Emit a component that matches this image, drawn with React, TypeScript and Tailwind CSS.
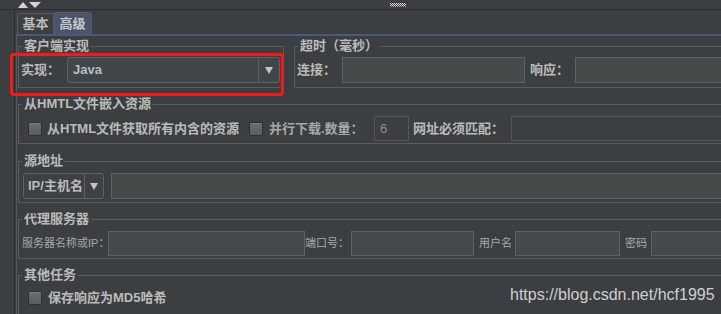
import React from "react";

const FONT = "font-['Liberation_Sans','Noto_Sans_CJK_SC',sans-serif]";

function Arrow({ color = "#c4c4c4" }: { color?: string }) {
  return (
    <svg width="8" height="7" viewBox="0 0 8 7">
      <polygon points="0,0 8,0 4,7" fill={color} />
    </svg>
  );
}

function Combo({ text, w, arrowW, bg, textCls }: { text: string; w: string; arrowW: string; bg: string; textCls: string }) {
  return (
    <div className={`flex h-[26px] shrink-0 rounded-[3px] border border-[#5f6264] ${bg} ${w}`}>
      <div className={`flex flex-1 items-center pl-[4px] ${textCls}`}>{text}</div>
      <div className={`flex items-center justify-center border-l border-[#5f6264] ${arrowW}`}>
        <Arrow />
      </div>
    </div>
  );
}

function Check() {
  return (
    <div className="h-[14px] w-[14px] shrink-0 rounded-[2px] border border-[#2e3032] bg-gradient-to-b from-[#6b6e70] to-[#5a5d5f] shadow-[inset_0_1px_0_#7a7d7f]" />
  );
}

function Group({ title, className = "", children }: { title: string; className?: string; children: React.ReactNode }) {
  return (
    <fieldset className={`border border-[#595b5d] px-[2px] ${className}`}>
      <legend className="ml-[1px] px-[2px] text-[13px] leading-[14px] font-semibold text-[#bbbbbb]">{title}</legend>
      {children}
    </fieldset>
  );
}

export default function App() {
  return (
    <div className={`relative flex h-[314px] w-[721px] flex-col overflow-hidden bg-[#3c3f41] ${FONT}`}>
      {/* top strip */}
      <div className="relative flex h-[10px] shrink-0 items-start border-b border-[#2b2b2b]">
        <svg className="ml-[18px] mt-[2px]" width="23" height="6" viewBox="0 0 23 6">
          <polygon points="0,6 5,0 10,6" fill="#d2d2d2" />
          <polygon points="11,0 23,0 17,6" fill="#d2d2d2" />
        </svg>
        <svg className="ml-[349px] mt-[3px]" width="16" height="4" viewBox="0 0 16 4">
          {[0, 1, 2, 3, 4, 5, 6, 7].map((i) => (
            <g key={i}>
              <rect x={i * 2} y={0} width="1" height="1" fill="#e0e0e0" />
              <rect x={i * 2 + 1} y={1} width="1" height="1" fill="#e0e0e0" />
              <rect x={i * 2} y={2} width="1" height="1" fill="#e0e0e0" />
              <rect x={i * 2 + 1} y={3} width="1" height="1" fill="#9a9a9a" />
            </g>
          ))}
        </svg>
      </div>

      <div className="flex flex-1">
        {/* left column */}
        <div className="w-[15px] shrink-0 border-r border-[#2b2b2b]" />

        {/* content */}
        <div className="flex w-[740px] shrink-0 flex-col pl-[1px]">
          {/* tabs */}
          <div className="flex h-[24px] items-end pl-[1px] pt-[3px]">
            <div className="flex h-[21px] w-[36px] items-center justify-center rounded-tl-[3px] border-l border-t border-[#595b5d] text-[13px] font-semibold text-[#bbbbbb]">
              基本
            </div>
            <div className="flex h-[22px] w-[39px] items-center justify-center rounded-t-[3px] border border-b-0 border-[#595b5d] bg-[#4a556d] text-[13px] font-semibold text-[#c8c8c8]">
              高级
            </div>
          </div>
          <div className="h-[2px] bg-[#4b5a7c]" />

          {/* panel */}
          <div className="flex flex-1 flex-col border-l border-[#565859] pl-[1px]">
            <div className="mt-[3px] flex gap-[10px]">
              <Group title="客户端实现" className="w-[266px] shrink-0 pb-[4px] pt-[4px]">
                <div className="flex h-[26px] items-center">
                  <div className="w-[46px] text-[13px] font-semibold text-[#bbbbbb]">实现：</div>
                  <Combo text="Java" w="w-[213px]" arrowW="w-[21px]" bg="bg-[#434648]" textCls="text-[13px] font-semibold text-[#b4bfcc] pl-[5px]" />
                </div>
              </Group>
              <Group title="超时（毫秒）" className="flex-1 pb-[4px] pt-[4px]">
                <div className="flex h-[26px] items-center">
                  <div className="w-[45px] text-[13px] font-semibold text-[#bbbbbb]">连接：</div>
                  <div className="h-[26px] w-[183px] shrink-0 border border-[#5f6264] bg-[#45494a]" />
                  <div className="ml-[5px] w-[45px] text-[13px] font-semibold text-[#bbbbbb]">响应：</div>
                  <div className="h-[26px] flex-1 border border-[#5f6264] bg-[#45494a]" />
                </div>
              </Group>
            </div>

            <Group title="从HMTL文件嵌入资源" className="mt-[9px] pb-[2px] pt-[5px]">
              <div className="flex h-[25px] items-center whitespace-nowrap text-[13px] font-semibold text-[#bbbbbb]">
                <div className="ml-[7px]"><Check /></div>
                <div className="ml-[5px] w-[188px]">从HTML文件获取所有内含的资源</div>
                <div className="ml-[14px]"><Check /></div>
                <div className="ml-[6px] w-[91px] text-[#a8a8a8]">并行下载.数量：</div>
                <div className="ml-[14px] flex h-[25px] w-[35px] shrink-0 items-center border border-[#555759] pl-[5px] font-normal text-[#8c8c8c]">6</div>
                <div className="ml-[4px] w-[85px]">网址必须匹配：</div>
                <div className="ml-[13px] h-[25px] flex-1 border border-[#555759]" />
              </div>
            </Group>

            <Group title="源地址" className="mt-[10px] pb-[3px] pt-[5px]">
              <div className="flex h-[26px] items-center">
                <div className="ml-[2px]">
                  <Combo text="IP/主机名" w="w-[81px]" arrowW="w-[19px]" bg="bg-[#3e4143]" textCls="text-[13px] font-semibold text-[#bbbbbb] pl-[3px]" />
                </div>
                <div className="ml-[7px] h-[26px] flex-1 border border-[#5f6264] bg-[#45494a]" />
              </div>
            </Group>

            <Group title="代理服务器" className="mt-[9px] pb-[2px] pt-[5px]">
              <div className="flex h-[25px] items-center whitespace-nowrap text-[11px] text-[#a9a9a9]">
                <div className="ml-[1px] w-[86px]">服务器名称或IP：</div>
                <div className="h-[25px] w-[197px] shrink-0 border border-[#5f6264] bg-[#45494a]" />
                <div className="w-[46px]">端口号：</div>
                <div className="h-[25px] w-[123px] shrink-0 border border-[#5f6264] bg-[#45494a]" />
                <div className="ml-[5px] w-[36px]">用户名</div>
                <div className="h-[25px] w-[105px] shrink-0 border border-[#5f6264] bg-[#45494a]" />
                <div className="ml-[5px] w-[26px]">密码</div>
                <div className="h-[25px] flex-1 border border-[#5f6264] bg-[#45494a]" />
              </div>
            </Group>

            <Group title="其他任务" className="mt-[9px] pb-[10px] pt-[8px]">
              <div className="flex h-[16px] items-center whitespace-nowrap text-[13px] font-semibold text-[#bbbbbb]">
                <div className="ml-[7px]"><Check /></div>
                <div className="ml-[6px]">保存响应为MD5哈希</div>
              </div>
            </Group>
          </div>
        </div>
      </div>

      {/* red highlight */}
      <div className="pointer-events-none absolute left-[10px] top-[53px] h-[43px] w-[274px] rounded-[4px] border-[3px] border-[#f31a1a]" />

      {/* watermark */}
      <div className="pointer-events-none absolute left-[510px] top-[286px] font-['Liberation_Sans',sans-serif] text-[16px] leading-[18px] text-[#cfcfcf]">
        https://blog.csdn.net/hcf1995
      </div>
    </div>
  );
}
